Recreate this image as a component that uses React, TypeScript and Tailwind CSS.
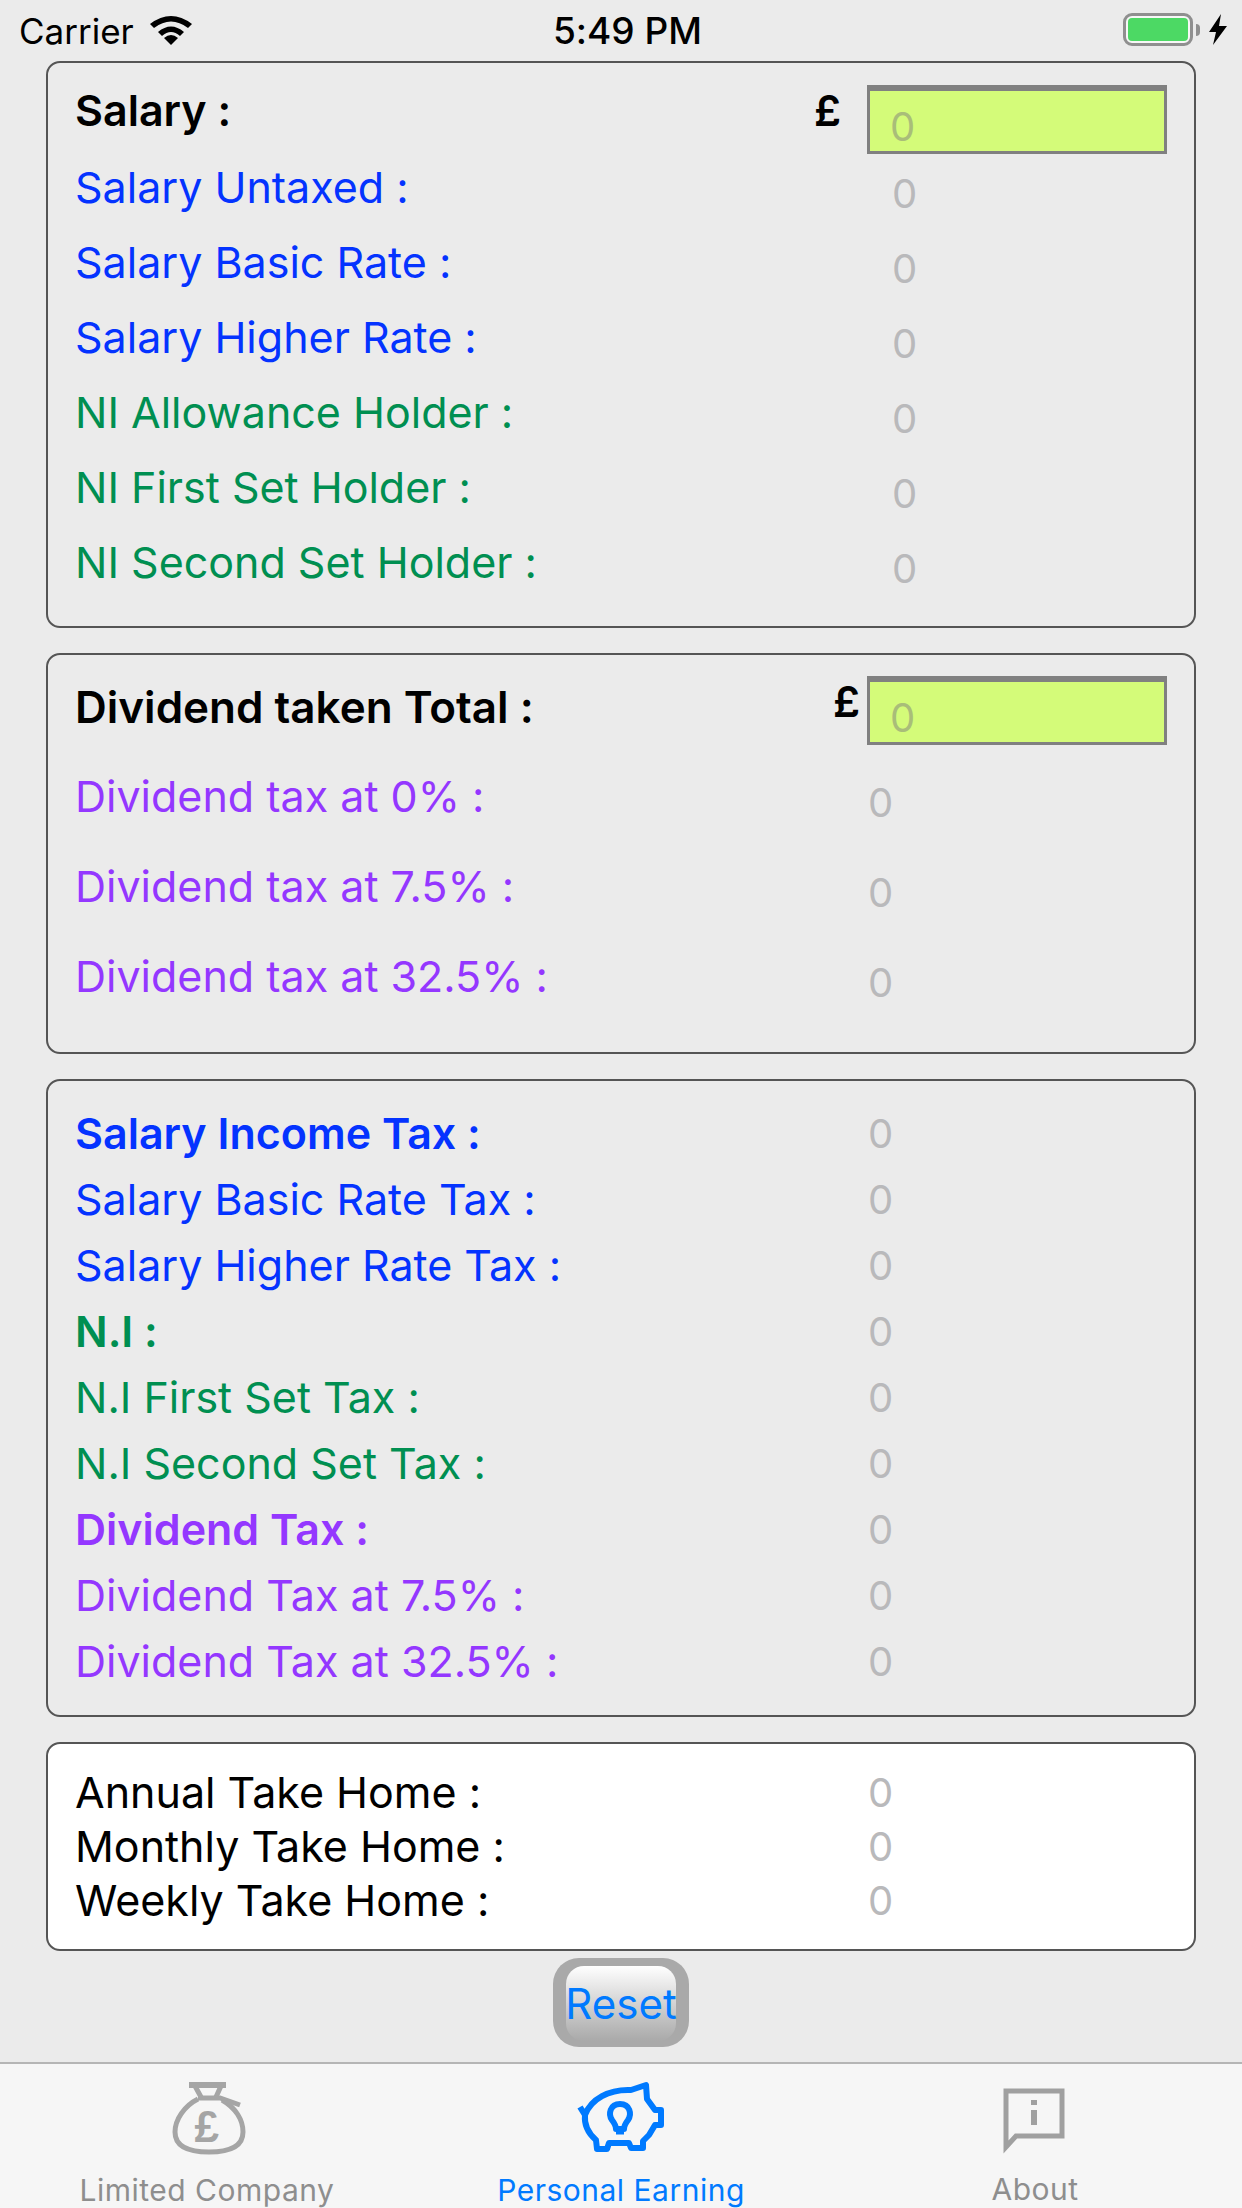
const BLUE = "text-[#0433ff]";
const GREEN = "text-[#008f51]";
const PURPLE = "text-[#9437ff]";

function Row({ label, color, bold, rowClass, valueClass, labelWidth }: { label: string; color: string; bold?: boolean; rowClass: string; valueClass?: string; labelWidth: string }) {
    return (
        <div className={`flex items-center ${rowClass}`}>
            <span className={`${labelWidth} whitespace-nowrap ${color} ${bold ? "font-semibold" : "font-normal"}`}>{label}</span>
            <span className={`text-[#b9b9bb] ${valueClass ?? ""}`}>0</span>
        </div>
    );
}

function AmountRow({ label, poundClass, labelClass }: { label: string; poundClass: string; labelClass: string }) {
    return (
        <div className="flex items-start">
            <span className={`flex-1 whitespace-nowrap font-semibold text-black ${labelClass}`}>{label}</span>
            <span className={`font-semibold text-black ${poundClass}`}>£</span>
            <div className="w-[300px] h-[69px] bg-[#d4fb79] border-[3px] border-t-[6px] border-[#808080] pl-[20px] leading-[66px] text-[#a9bd79] pt-[3px] text-[40px]">0</div>
        </div>
    );
}

function Card({ children, className }: { children: React.ReactNode; className: string }) {
    return <div className={`rounded-[14px] border-2 border-[#555555] pl-[27px] pr-[27px] ${className}`}>{children}</div>;
}

export default function App() {
    const firstRows = [
        ["Salary Untaxed :", BLUE],
        ["Salary Basic Rate :", BLUE],
        ["Salary Higher Rate :", BLUE],
        ["NI Allowance Holder :", GREEN],
        ["NI First Set Holder :", GREEN],
        ["NI Second Set Holder :", GREEN],
    ];
    const taxRows: [string, string, boolean][] = [
        ["Salary Income Tax :", BLUE, true],
        ["Salary Basic Rate Tax :", BLUE, false],
        ["Salary Higher Rate Tax :", BLUE, false],
        ["N.I :", GREEN, true],
        ["N.I First Set Tax :", GREEN, false],
        ["N.I Second Set Tax :", GREEN, false],
        ["Dividend Tax :", PURPLE, true],
        ["Dividend Tax at 7.5% :", PURPLE, false],
        ["Dividend Tax at 32.5% :", PURPLE, false],
    ];

    return (
        <div className="w-[1242px] h-[2208px] bg-[#ebebeb] flex flex-col overflow-hidden text-[43px] leading-[48px] [font-feature-settings:'calt'_0] font-['Inter','Liberation_Sans',sans-serif]">
            {/* status bar */}
            <div className="h-[61px] shrink-0 flex items-center justify-between pl-[19px] pr-[15px] text-black text-[35px] relative">
                <div className="flex items-center gap-[16px]">
                    <span>Carrier</span>
                    <svg width="42" height="30" viewBox="0 0 42 30" className="-mt-[1px]">
                        <path d="M0 9 Q21 -7 42 9 L38 13 Q21 0 4 13 Z" fill="#000" />
                        <path d="M8 17 Q21 6 34 17 L30 21 Q21 13 12 21 Z" fill="#000" />
                        <path d="M21 30 L14 23 Q21 17 28 23 Z" fill="#000" />
                    </svg>
                </div>
                <span className="absolute left-[553px] font-medium text-[37px]">5:49 PM</span>
                <div className="flex items-center -mt-[2px]">
                    <div className="w-[70px] h-[33px] rounded-[9px] border-[3px] border-[#8f8f8f] bg-[#f7f7f7] p-[2px]">
                        <div className="w-full h-full rounded-[4px] bg-[#4cd964]" />
                    </div>
                    <div className="ml-[3px] w-[4px] h-[12px] bg-[#8f8f8f] rounded-r-sm" />
                    <svg width="18" height="31" viewBox="0 0 18 31" className="ml-[9px]">
                        <path d="M12 0 L0 18 H7 L4 31 L18 12 H10 Z" fill="#000" />
                    </svg>
                </div>
            </div>

            <div className="px-[46px] flex flex-col gap-[25px]">
                <Card className="h-[567px] pt-[22px]">
                    <AmountRow label="Salary :" labelClass="pt-[1px]" poundClass="mr-[26px] pt-[1px]" />
                    <div className="-mt-[5px]">
                        {firstRows.map(([label, color], i) => (
                            <Row key={i} label={label} color={color} labelWidth="w-[817px]" rowClass="h-[75px]" valueClass="pt-[14px] text-[40px]" />
                        ))}
                    </div>
                </Card>

                <Card className="h-[401px] pt-[21px]">
                    <AmountRow label="Dividend taken Total :" labelClass="pt-[7px] text-[44px]" poundClass="mr-[7px] pt-[1px]" />
                    <div className="mt-[6px]">
                        {["Dividend tax at 0% :", "Dividend tax at 7.5% :", "Dividend tax at 32.5% :"].map((label, i) => (
                            <Row key={i} label={label} color={PURPLE} labelWidth="w-[793px]" rowClass="h-[90px]" valueClass="pt-[14px] text-[40px]" />
                        ))}
                    </div>
                </Card>

                <Card className="h-[638px] pt-[19px]">
                    {taxRows.map(([label, color, bold], i) => (
                        <Row key={i} label={label} color={color} bold={bold} labelWidth="w-[793px]" rowClass="h-[66px]" valueClass="pt-[2px] text-[40px]" />
                    ))}
                </Card>

                <Card className="h-[209px] pt-[21px] bg-white">
                    {["Annual Take Home :", "Monthly Take Home :", "Weekly Take Home :"].map((label, i) => (
                        <Row key={i} label={label} color="text-black" labelWidth="w-[793px]" rowClass="h-[54px]" valueClass="pt-[2px] text-[40px]" />
                    ))}
                </Card>
            </div>

            <div className="flex justify-center mt-[7px]">
                <div className="w-[136px] h-[89px] rounded-[26px] bg-[#a9a9a9] pt-[8px] px-[13px] pb-[6px]">
                    <div className="w-full h-full rounded-[18px] bg-gradient-to-b from-white to-[#a9a9a9] flex items-center justify-center text-[#007aff] text-[42px]">Reset</div>
                </div>
            </div>

            {/* tab bar */}
            <div className="mt-auto h-[146px] shrink-0 bg-[#f6f6f6] border-t-2 border-[#b5b5b5] grid grid-cols-3 text-[30px] tracking-[0.5px]">
                <div className="flex flex-col items-center text-[#8e8e8e]">
                    <svg width="100" height="85" viewBox="0 0 100 85" fill="none" stroke="#a5a5a5" strokeWidth="5" className="mt-[8px] ml-[6px]">
                        <path d="M29 13 H66" strokeWidth="6" />
                        <path d="M35 14 L41 25 M61 14 L56 25" />
                        <path d="M38 26 H60 L80 33" />
                        <path d="M38 27 C24 34 15 48 15 60 C15 74 28 80 49 80 C70 80 83 74 83 60 C83 48 76 36 62 28" />
                        <text x="47" y="70" textAnchor="middle" fontSize="44" fontWeight="700" fill="#a5a5a5" stroke="none" fontFamily="Liberation Sans">£</text>
                    </svg>
                    <span className="mt-[9px]">Limited Company</span>
                </div>
                <div className="flex flex-col items-center text-[#007aff]">
                    <svg width="100" height="85" viewBox="0 0 100 85" fill="none" stroke="#007aff" strokeWidth="6" strokeLinejoin="round" className="mt-[11px]">
                        <path d="M9 32 L14 40 C20 24 38 14 60 15 L75 10 L76 24 L84 35 L90 35 V50 L84 50 L78 60 L72 66 V73 H60 L58 68 H38 L36 74 H26 L25 65 C17 58 13 50 14 40" />
                        <path d="M49 29 C39 29 37 39 41 45 C44 49 45 51 45 54 H53 C53 51 54 49 57 45 C61 39 59 29 49 29 Z" />
                        <path d="M45 56 H53" strokeWidth="7" />
                    </svg>
                    <span className="mt-[6px]">Personal Earning</span>
                </div>
                <div className="flex flex-col items-center text-[#8e8e8e]">
                    <svg width="100" height="85" viewBox="0 0 100 85" fill="none" stroke="#a0a0a0" strokeWidth="5" className="mt-[11px]">
                        <path d="M21 16 H77 V61 H31 L21 72 Z" />
                        <path d="M49 25 V30 M49 35 V50" strokeWidth="6" />
                    </svg>
                    <span className="mt-[5px]">About</span>
                </div>
            </div>
        </div>
    );
}
